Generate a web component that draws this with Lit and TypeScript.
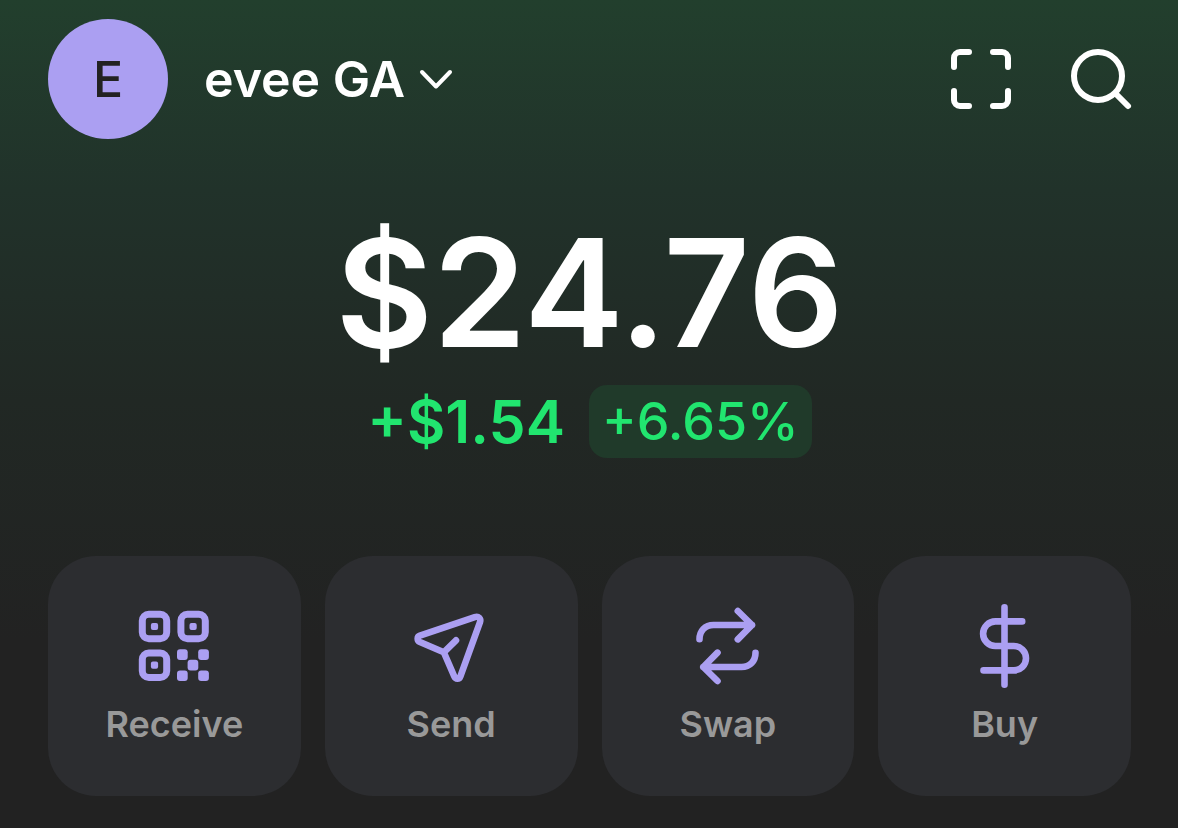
import { LitElement, html, css, svg } from "lit";
import { customElement } from "lit/decorators.js";

const receiveIcon = svg`
  <g fill="none" stroke="currentColor" stroke-width="7">
    <rect x="10.3" y="10.3" width="24.4" height="24.4" rx="6.5" />
    <rect x="48.9" y="10.3" width="24.4" height="24.4" rx="6.5" />
    <rect x="10.3" y="49" width="24.4" height="24.4" rx="6.5" />
  </g>
  <g fill="currentColor">
    <rect x="18.9" y="18.9" width="7.2" height="7.2" rx="2" />
    <rect x="57.5" y="18.9" width="7.2" height="7.2" rx="2" />
    <rect x="18.9" y="57.6" width="7.2" height="7.2" rx="2" />
    <rect x="45" y="45.2" width="10.7" height="10.7" rx="3" />
    <rect x="66.2" y="45.2" width="10.7" height="10.7" rx="3" />
    <rect x="55.6" y="55.8" width="10.7" height="10.7" rx="3" />
    <rect x="45" y="66.4" width="10.7" height="10.7" rx="3" />
    <rect x="66.2" y="66.4" width="10.7" height="10.7" rx="3" />
  </g>`;

const sendIcon = svg`
  <path class="line" d="M10.9 31.7 65.8 13.1C69.5 11.9 72.2 14.6 71 18.2L51.4 72.3C50.2 75.6 46.6 75.6 45.2 72.3L34.8 48.3 10.9 38C7.9 36.6 7.9 32.8 10.9 31.7ZM34.8 48.3 47 36.3" />`;

const swapIcon = svg`
  <path class="line" d="M13.5 35.3C13.5 27 19 21 27.5 21H66M51.8 7 66 21 51.8 35.3M69.5 48.7C69.5 57 64 63 55.5 63H17.3M31.5 48.7 17.3 63 31.5 77" />`;

const buyIcon = svg`
  <path class="line" d="M41.5 3.3V80.7M59.2 17.4H32.4A12.3 12.3 0 0 0 32.4 42H50.8A12.2 12.2 0 0 1 50.8 66.4H20.5" />`;

const actions = [
  { label: "Receive", icon: receiveIcon },
  { label: "Send", icon: sendIcon },
  { label: "Swap", icon: swapIcon },
  { label: "Buy", icon: buyIcon },
];

@customElement("app-root")
export class AppRoot extends LitElement {
  static styles = css`
    :host {
      display: block;
      box-sizing: border-box;
      min-height: 100vh;
      padding: 19px 47px 32px 48px;
      background: #222222 linear-gradient(#223f2d, #21322a 190px, #212824 400px, #222222 640px) no-repeat;
      color: #ffffff;
      font-family: Inter, "Liberation Sans", sans-serif;
      font-weight: 600;
    }
    button {
      margin: 0;
      padding: 0;
      border: 0;
      background: none;
      color: inherit;
      font: inherit;
      cursor: pointer;
    }
    svg {
      display: block;
      overflow: visible;
    }
    .line {
      fill: none;
      stroke: currentColor;
      stroke-width: 6.6;
      stroke-linecap: round;
      stroke-linejoin: round;
    }
    .header {
      display: flex;
      align-items: center;
      justify-content: space-between;
    }
    .account {
      display: flex;
      align-items: center;
      font-size: 50px;
      line-height: 60px;
    }
    .avatar {
      display: grid;
      place-items: center;
      width: 120px;
      height: 120px;
      margin-right: 36px;
      border-radius: 50%;
      background: #ab9ff2;
      color: #222222;
      font-weight: 500;
    }
    .chevron {
      margin-left: 14px;
    }
    .tools {
      display: flex;
      gap: 60px;
    }
    .balance {
      display: flex;
      flex-direction: column;
      align-items: center;
      margin: 62px 0 98px;
    }
    .amount {
      margin: 0;
      font-size: 150px;
      font-weight: 600;
      line-height: 184px;
    }
    .change {
      display: flex;
      align-items: center;
      gap: 24px;
      color: #21e56f;
      font-size: 59px;
      line-height: 73px;
    }
    .percent {
      padding: 0 13px;
      border-radius: 18px;
      background: #203a2a;
      font-size: 52px;
      font-weight: 500;
    }
    .actions {
      display: grid;
      grid-template-columns: repeat(4, 1fr);
      gap: 24px;
    }
    .action {
      display: flex;
      flex-direction: column;
      align-items: center;
      gap: 12px;
      padding: 48px 0;
      border-radius: 48px;
      background: #2c2d30;
      color: #999999;
      font-size: 36px;
      line-height: 48px;
    }
    .action svg {
      color: #ab9ff2;
    }
  `;

  render() {
    return html`
      <header class="header">
        <button class="account">
          <span class="avatar">E</span>
          <span>evee GA</span>
          <svg class="chevron" width="34" height="20" viewBox="0 0 34 20" fill="none" stroke="currentColor" stroke-width="4" stroke-linecap="round" stroke-linejoin="round" aria-hidden="true">
            <path d="M3 3 17 17.5 31 3" />
          </svg>
        </button>
        <div class="tools">
          <button aria-label="Scan">
            <svg width="60" height="60" viewBox="0 0 60 60" fill="none" stroke="currentColor" stroke-width="6" stroke-linecap="round" aria-hidden="true">
              <path d="M3 18V9A6 6 0 0 1 9 3H18M42 3H51A6 6 0 0 1 57 9V18M57 42V51A6 6 0 0 1 51 57H42M18 57H9A6 6 0 0 1 3 51V42" />
            </svg>
          </button>
          <button aria-label="Search">
            <svg width="60" height="60" viewBox="0 0 60 60" fill="none" stroke="currentColor" stroke-width="6" stroke-linecap="round" aria-hidden="true">
              <circle cx="27" cy="27" r="24" />
              <path d="M45 45 57 57" />
            </svg>
          </button>
        </div>
      </header>
      <section class="balance">
        <h1 class="amount">$24.76</h1>
        <div class="change">
          <span>+$1.54</span>
          <span class="percent">+6.65%</span>
        </div>
      </section>
      <nav class="actions">
        ${actions.map(
          ({ label, icon }) => html`
            <button class="action">
              <svg width="84" height="84" viewBox="0 0 84 84" aria-hidden="true">${icon}</svg>
              <span>${label}</span>
            </button>
          `
        )}
      </nav>
    `;
  }
}
